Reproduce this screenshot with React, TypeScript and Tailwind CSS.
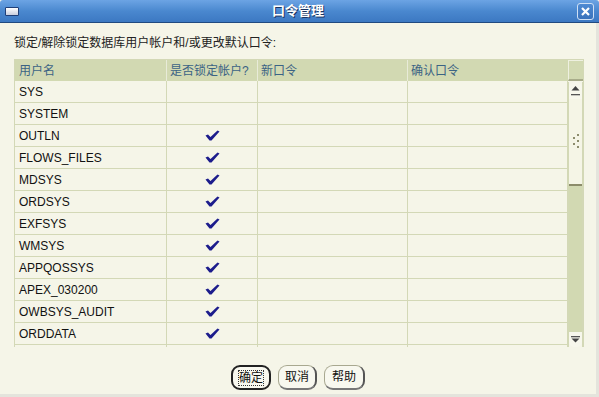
import React from "react";

const rows: [string, boolean][] = [
  ["SYS", false],
  ["SYSTEM", false],
  ["OUTLN", true],
  ["FLOWS_FILES", true],
  ["MDSYS", true],
  ["ORDSYS", true],
  ["EXFSYS", true],
  ["WMSYS", true],
  ["APPQOSSYS", true],
  ["APEX_030200", true],
  ["OWBSYS_AUDIT", true],
  ["ORDDATA", true],
];

const font = { fontFamily: '"Liberation Sans", "Noto Sans CJK SC", sans-serif' };

function Check() {
  return (
    <svg width="15" height="11" viewBox="0 0 15 11">
      <path d="M0.5 5.5 L3 4.5 L5.5 7 L12.5 0.5 L14.5 1.5 L6.5 10.5 L4.5 10.5 Z" fill="#1c1c8c" />
    </svg>
  );
}

export default function App() {
  return (
    <div className="w-[599px] h-[397px] bg-[#f5f5e8] flex flex-col relative overflow-hidden" style={font}>
      {/* Title bar */}
      <div className="h-[23px] shrink-0 bg-gradient-to-b from-[#6ca4e4] via-[#4a88cf] to-[#3c78c2] border-b border-[#204a80] flex items-center px-[5px] rounded-t-[3px]">
        <div className="w-[14px] h-[9px] bg-gradient-to-b from-white to-[#c8cede] border border-[#1f3f78] rounded-[1px]" />
        <div className="flex-1 text-center text-white font-bold text-[13px] [text-shadow:1px_1px_0_#1a3460]">口令管理</div>
        <div className="w-[17px] h-[17px] rounded-[3px] border border-[#cfe0f5] bg-gradient-to-b from-[#4f8bd3] to-[#3a72bb] flex items-center justify-center">
          <svg width="9" height="9" viewBox="0 0 9 9">
            <path d="M1 1 L8 8 M8 1 L1 8" stroke="white" strokeWidth="2.2" />
          </svg>
        </div>
      </div>

      <div className="flex-1 flex flex-col border-r-[3px] border-r-[#e4e4dc] border-b-[3px] border-b-[#e4e4dc]">
        <div className="pl-[14px] pt-[11px] h-[36px] text-[12px] text-[#222]">锁定/解除锁定数据库用户帐户和/或更改默认口令:</div>

        {/* Table */}
        <div className="ml-[14px] w-[570px] h-[288px] border border-b-0 border-[#d3d8b6] flex">
          <div className="w-[553px] flex flex-col">
            <div className="h-[21px] bg-[#d2d9b2] flex text-[12px] text-[#3b6384]">
              <div className="w-[152px] pl-[4px] flex items-center border-r border-[#e8ebd8]">用户名</div>
              <div className="w-[91px] pl-[3px] flex items-center border-r border-[#e8ebd8]">是否锁定帐户?</div>
              <div className="w-[150px] pl-[3px] flex items-center border-r border-[#e8ebd8]">新口令</div>
              <div className="w-[160px] pl-[3px] flex items-center">确认口令</div>
            </div>
            {rows.map(([name, locked]) => (
              <div key={name} className="h-[22px] flex text-[12px] text-[#111] border-b border-[#d3d8b6]">
                <div className="w-[152px] pl-[4px] flex items-center border-r border-[#d3d8b6]">{name}</div>
                <div className="w-[91px] flex items-center justify-center border-r border-[#d3d8b6]">{locked ? <Check /> : null}</div>
                <div className="w-[150px] border-r border-[#d3d8b6]" />
                <div className="w-[160px] border-r border-[#d3d8b6]" />
              </div>
            ))}
            <div className="flex-1 flex">
              <div className="w-[152px] border-r border-[#d3d8b6]" />
              <div className="w-[91px] border-r border-[#d3d8b6]" />
              <div className="w-[150px] border-r border-[#d3d8b6]" />
              <div className="w-[160px] border-r border-[#d3d8b6]" />
            </div>
          </div>
          {/* Scrollbar */}
          <div className="w-[16px] flex flex-col">
            <div className="h-[21px] bg-[#d2d9b2] border-l border-t border-[#eef0e0] border-b-2 border-b-[#a8ac8a]" />
            <div className="flex-1 flex flex-col border-x border-[#d3d8b6] mt-[1px]">
              <div className="h-[17px] bg-[#f7f7ec] rounded-t-[6px] flex flex-col items-center justify-center">
                <svg width="9" height="11" viewBox="0 0 9 11">
                  <path d="M4.5 1 L8.5 5.5 L0.5 5.5 Z" fill="#444" />
                  <rect x="0" y="9" width="9" height="1.3" fill="#555" />
                </svg>
              </div>
              <div className="h-[87px] bg-[#f5f5e6] border-b-2 border-b-[#8c8c6a] flex items-center justify-center">
                <svg width="8" height="18" viewBox="0 0 8 18">
                  <g fill="#8c8c6c">
                    <rect x="5" y="1" width="2" height="2" />
                    <rect x="1" y="4" width="2" height="2" />
                    <rect x="5" y="7" width="2" height="2" />
                    <rect x="1" y="10" width="2" height="2" />
                    <rect x="5" y="13" width="2" height="2" />
                  </g>
                </svg>
              </div>
              <div className="flex-1 bg-[#d2d9b2]" />
              <div className="h-[15px] bg-[#f7f7ec] rounded-b-[5px] flex items-center justify-center">
                <svg width="9" height="7" viewBox="0 0 9 7">
                  <rect x="0" y="0" width="9" height="1.3" fill="#555" />
                  <path d="M0.5 2.5 L8.5 2.5 L4.5 6.5 Z" fill="#444" />
                </svg>
              </div>
            </div>
          </div>
        </div>

        {/* Buttons */}
        <div className="flex justify-center items-start gap-[7px] pt-[18px] text-[12px] text-[#111]">
          <div className="w-[40px] h-[25px] rounded-[9px] border-2 border-[#222] bg-[#f8f8ef] flex items-center justify-center">
            <span className="border border-dotted border-[#333] leading-[14px]">确定</span>
          </div>
          <div className="w-[39px] h-[25px] rounded-[9px] border border-[#a8a890] border-r-2 border-r-[#555] border-b-2 border-b-[#777] bg-[#f8f8ef] flex items-center justify-center">取消</div>
          <div className="w-[41px] h-[25px] rounded-[9px] border border-[#a8a890] border-r-2 border-r-[#555] border-b-2 border-b-[#777] bg-[#f8f8ef] flex items-center justify-center">帮助</div>
        </div>
      </div>
    </div>
  );
}
